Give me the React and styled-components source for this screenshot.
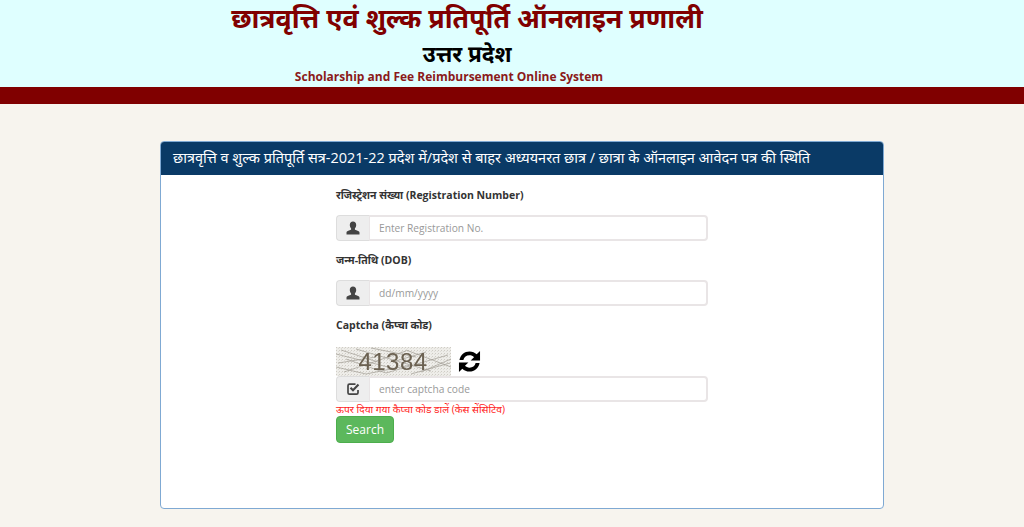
import styled, { createGlobalStyle } from "styled-components";

const Global = createGlobalStyle`
  * { box-sizing: border-box; }
  html, body { margin: 0; padding: 0; }
  body {
    background: #f7f4ee;
    font-family: "Open Sans", "Noto Sans", sans-serif;
    overflow: hidden;
  }
`;

const Header = styled.header`
  height: 87px;
  background: #dfffff;
  padding-right: 90px;
  text-align: center;
  overflow: hidden;
`;

const Title = styled.h1`
  margin: 0;
  font-size: 26.8px;
  line-height: 36px;
  font-weight: 700;
  color: #800000;
`;

const State = styled.h2`
  margin: 3px 0 0;
  font-size: 22.5px;
  line-height: 30px;
  font-weight: 700;
  color: #000;
`;

const Tagline = styled.h3`
  margin: 0 36px 0 0;
  font-size: 12px;
  line-height: 16px;
  font-weight: 700;
  color: #8b1a1a;
`;

const Band = styled.div`
  height: 17px;
  background: #800000;
`;

const Main = styled.main`
  padding: 37px 140px 0 160px;
`;

const Panel = styled.section`
  width: 724px;
  height: 368px;
  background: #fff;
  border: 1px solid #7fa9d3;
  border-radius: 4px;
  overflow: hidden;
`;

const PanelHead = styled.div`
  height: 33px;
  background: #0a3a66;
  color: #fff;
  font-size: 14.5px;
  line-height: 32px;
  padding-left: 12px;
  white-space: nowrap;
`;

const Form = styled.form`
  width: 372px;
  margin-left: 175px;
  padding-top: 10px;
`;

const Label = styled.label`
  display: block;
  height: 20px;
  font-size: 10.5px;
  line-height: 20px;
  font-weight: 700;
  color: #333;
`;

const Group = styled.div`
  display: flex;
  height: 26px;
  margin-top: ${(p) => p.$top}px;
  margin-bottom: ${(p) => p.$bottom}px;
`;

const Addon = styled.span`
  flex: 0 0 33px;
  display: flex;
  align-items: center;
  justify-content: center;
  background: #eee;
  border: 1px solid #ddd;
  border-right: 0;
  border-radius: 4px 0 0 4px;
`;

const Field = styled.input`
  flex: 1;
  min-width: 0;
  border: 2px solid #e9e5e6;
  border-left-width: 1px;
  border-radius: 0 4px 4px 0;
  padding: 0 9px;
  background: #fff;
  font-family: inherit;
  font-size: 10.2px;
  outline: none;

  &::placeholder {
    color: #999;
    opacity: 1;
  }
`;

const CaptchaRow = styled.div`
  display: flex;
  align-items: center;
  gap: 7px;
  height: 29px;
  margin-top: 12px;
`;

const CaptchaImage = styled.svg`
  display: block;
  filter: blur(0.4px);
`;

const Hint = styled.div`
  height: 14px;
  font-size: 10.2px;
  line-height: 14px;
  color: #f22;
`;

const SearchButton = styled.button`
  display: block;
  width: 58px;
  height: 27px;
  padding: 0;
  background: #5cb85c;
  border: 1px solid #4cae4c;
  border-radius: 4px;
  color: #fff;
  font-family: inherit;
  font-size: 12px;
`;

const UserIcon = () => (
  <svg width="14" height="14" viewBox="0 0 14 14" aria-hidden="true">
    <path
      fill="#444"
      d="M7 .5c2 0 3.200 1.500 3.200 3.500 0 1.400-.6 2.700-1.300 3.400v1.200c0 .6 4.400 1.300 4.600 2.900V13.500H.5v-2c.2-1.600 4.600-2.300 4.600-2.900V7.400C4.400 6.700 3.800 5.400 3.800 4 3.800 2 5 .5 7 .5z"
    />
  </svg>
);

const CheckIcon = () => (
  <svg width="14" height="14" viewBox="0 0 14 14" aria-hidden="true">
    <path d="M9.500 2.200H3.500A1.500 1.500 0 0 0 2 3.700v7A1.500 1.500 0 0 0 3.500 12.200h7A1.500 1.500 0 0 0 12 10.700V8" fill="none" stroke="#444" strokeWidth="1.700" />
    <path d="M4.500 5.800L7 8.300L12.500 2.600" fill="none" stroke="#444" strokeWidth="2.100" />
  </svg>
);

const arrow = "M1.500 10.500C2.500 5 6.800 1.500 12 1.500c3 0 5.600 1.100 7.500 3L23 1v10h-9.800l3.500-3.500C15.500 6.300 13.900 5.600 12 5.600c-3.200 0-5.700 2-6.400 4.900z";

const RefreshIcon = () => (
  <svg width="23" height="23" viewBox="0 0 24 24" aria-hidden="true">
    <path fill="#000" d={arrow} />
    <path fill="#000" transform="rotate(180 12 12)" d={arrow} />
  </svg>
);

const scratches = [
  "M0 7L60 22", "M8 25L70 4", "M20 2L95 24", "M50 26L112 8", "M70 3L115 20",
  "M2 16L40 10", "M85 25L115 12", "M30 27L75 18", "M90 5L60 14", "M10 12L50 26",
  "M0 20L30 27", "M35 1L80 10", "M75 27L114 16", "M5 3L45 16",
];

const Captcha = () => (
  <CaptchaImage width="115" height="29" viewBox="0 0 115 29" role="img" aria-label="captcha">
    <defs>
      <pattern id="grain" width="3" height="3" patternUnits="userSpaceOnUse">
        <rect width="3" height="3" fill="#eeede9" />
        <rect width="1" height="1" fill="#cfccc5" />
        <rect x="2" y="1" width="1" height="1" fill="#dedcd6" />
      </pattern>
    </defs>
    <rect width="115" height="29" fill="url(#grain)" />
    {scratches.map((d) => (
      <path key={d} d={d} stroke="#a09c93" strokeWidth=".7" fill="none" />
    ))}
    <text x="57" y="23" textAnchor="middle" fontFamily="'Liberation Sans', sans-serif" fontSize="24" letterSpacing=".5" fill="#6b6151">
      41384
    </text>
  </CaptchaImage>
);

const App = () => (
  <>
    <Global />
    <Header>
      <Title>छात्रवृत्ति एवं शुल्क प्रतिपूर्ति ऑनलाइन प्रणाली</Title>
      <State>उत्तर प्रदेश</State>
      <Tagline>Scholarship and Fee Reimbursement Online System</Tagline>
    </Header>
    <Band />
    <Main>
      <Panel>
        <PanelHead>छात्रवृत्ति व शुल्क प्रतिपूर्ति सत्र-2021-22 प्रदेश में/प्रदेश से बाहर अध्ययनरत छात्र / छात्रा के ऑनलाइन आवेदन पत्र की स्थिति</PanelHead>
        <Form>
          <Label>रजिस्ट्रेशन संख्या (Registration Number)</Label>
          <Group $top={10} $bottom={9}>
            <Addon><UserIcon /></Addon>
            <Field placeholder="Enter Registration No." />
          </Group>
          <Label>जन्म-तिथि (DOB)</Label>
          <Group $top={10} $bottom={9}>
            <Addon><UserIcon /></Addon>
            <Field placeholder="dd/mm/yyyy" />
          </Group>
          <Label>Captcha (कैप्चा कोड)</Label>
          <CaptchaRow>
            <Captcha />
            <RefreshIcon />
          </CaptchaRow>
          <Group $top={0} $bottom={0}>
            <Addon><CheckIcon /></Addon>
            <Field placeholder="enter captcha code" />
          </Group>
          <Hint>ऊपर दिया गया कैप्चा कोड डालें (केस सेंसिटिव)</Hint>
          <SearchButton type="button">Search</SearchButton>
        </Form>
      </Panel>
    </Main>
  </>
);

export default App;
